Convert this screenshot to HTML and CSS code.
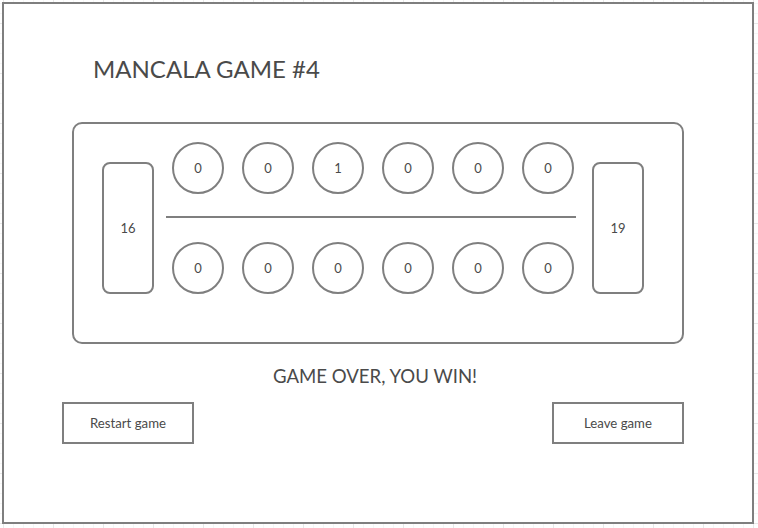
FILE: index.html
```html
<!DOCTYPE html>
<html>
<head>
<meta charset="utf-8">
<link rel="stylesheet" href="styles.css">
</head>
<body>
<div class="frame">
  <h1 class="title">MANCALA GAME #4</h1>
  <div class="board">
    <div class="store">16</div>
    <div class="middle">
      <div class="row">
        <div class="pit">0</div><div class="pit">0</div><div class="pit">1</div><div class="pit">0</div><div class="pit">0</div><div class="pit">0</div>
      </div>
      <div class="divider"></div>
      <div class="row">
        <div class="pit">0</div><div class="pit">0</div><div class="pit">0</div><div class="pit">0</div><div class="pit">0</div><div class="pit">0</div>
      </div>
    </div>
    <div class="store">19</div>
  </div>
  <p class="status">GAME OVER, YOU WIN!</p>
  <div class="actions">
    <button class="btn">Restart game</button>
    <button class="btn">Leave game</button>
  </div>
</div>
</body>
</html>
```
FILE: styles.css
```css
html, body {
  margin: 0;
  padding: 0;
}
body {
  width: 758px;
  height: 528px;
  font-family: Lato, "Open Sans", sans-serif;
  color: #4a4a4a;
  background-color: #fff;
  background-image:
    linear-gradient(to right, #e8e8e8 1px, transparent 1px),
    linear-gradient(to bottom, #e8e8e8 1px, transparent 1px),
    linear-gradient(to right, #f6f6f6 1px, transparent 1px),
    linear-gradient(to bottom, #f6f6f6 1px, transparent 1px);
  background-size: 50px 50px, 50px 50px, 10px 10px, 10px 10px;
  background-position: 3px 23px, 3px 23px, 3px 3px, 3px 3px;
  overflow: hidden;
}
.frame {
  box-sizing: border-box;
  margin: 2px;
  width: 752px;
  height: 522px;
  border: 2px solid #7f7f7f;
  background: #fff;
  padding: 51px 0 0 68px;
}
.title {
  margin: 0 0 39px 21px;
  font-size: 24px;
  line-height: 28px;
  font-weight: 400;
  color: #4a4a4a;
}
.board {
  box-sizing: border-box;
  width: 612px;
  height: 222px;
  border: 2px solid #7f7f7f;
  border-radius: 10px;
  padding: 18px 38px 48px 28px;
  display: flex;
  align-items: flex-end;
  gap: 18px;
}
.store {
  box-sizing: border-box;
  width: 52px;
  height: 132px;
  border: 2px solid #7f7f7f;
  border-radius: 8px;
  display: flex;
  align-items: center;
  justify-content: center;
  font-size: 13px;
}
.middle {
  width: 402px;
  display: flex;
  flex-direction: column;
}
.row {
  display: flex;
  gap: 18px;
}
.pit {
  box-sizing: border-box;
  width: 52px;
  height: 52px;
  border: 2px solid #7f7f7f;
  border-radius: 50%;
  display: flex;
  align-items: center;
  justify-content: center;
  font-size: 13px;
}
.divider {
  height: 2px;
  background: #7f7f7f;
  margin: 22px -2px 24px -6px;
}
.status {
  margin: 21px 0 0 -3px;
  width: 612px;
  text-align: center;
  font-size: 18.6px;
  line-height: 22px;
}
.actions {
  margin: 15px 0 0 -10px;
  width: 622px;
  display: flex;
  justify-content: space-between;
}
.btn {
  box-sizing: border-box;
  width: 132px;
  height: 42px;
  border: 2px solid #7f7f7f;
  background: #fff;
  font-family: Lato, "Open Sans", sans-serif;
  font-size: 13.2px;
  color: #4a4a4a;
  padding: 0;
}
```
